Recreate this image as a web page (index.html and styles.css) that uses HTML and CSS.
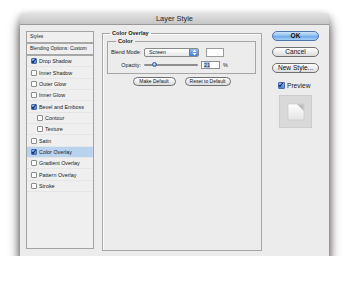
FILE: index.html
```html
<!DOCTYPE html>
<html lang="en">
<head>
    <meta charset="UTF-8">
    <meta name="viewport" content="width=device-width, initial-scale=1.0">
    <title>Layer Style</title>
    <link rel="stylesheet" href="styles.css">
</head>
<body>
    <div class="window">
        <div class="titlebar">Layer Style</div>

        <div class="content">
            <div class="styles-list">
                <div class="head">Styles</div>
                <div class="head">Blending Options: Custom</div>
                <div class="item"><span class="box checked"></span>Drop Shadow</div>
                <div class="item"><span class="box"></span>Inner Shadow</div>
                <div class="item"><span class="box"></span>Outer Glow</div>
                <div class="item"><span class="box"></span>Inner Glow</div>
                <div class="item"><span class="box checked"></span>Bevel and Emboss</div>
                <div class="item sub"><span class="box"></span>Contour</div>
                <div class="item sub"><span class="box"></span>Texture</div>
                <div class="item"><span class="box"></span>Satin</div>
                <div class="item selected"><span class="box checked"></span>Color Overlay</div>
                <div class="item"><span class="box"></span>Gradient Overlay</div>
                <div class="item"><span class="box"></span>Pattern Overlay</div>
                <div class="item"><span class="box"></span>Stroke</div>
            </div>

            <fieldset class="panel">
                <legend>Color Overlay</legend>
                <fieldset class="group">
                    <legend>Color</legend>
                    <div class="row">
                        <span class="label">Blend Mode:</span>
                        <div class="select">
                            <span>Screen</span>
                            <span class="stepper">
                                <svg width="5" height="7" viewBox="0 0 5 7"><path d="M0.5 3 L2.5 0.5 L4.5 3 Z M0.5 4 L2.5 6.5 L4.5 4 Z" fill="#fff"/></svg>
                            </span>
                        </div>
                        <span class="swatch"></span>
                    </div>
                    <div class="row">
                        <span class="label">Opacity:</span>
                        <div class="slider"><span class="knob"></span></div>
                        <span class="number"><span class="sel">21</span></span>
                        <span class="pct">%</span>
                    </div>
                </fieldset>
                <div class="defaults">
                    <button class="pill small make">Make Default</button>
                    <button class="pill small reset">Reset to Default</button>
                </div>
            </fieldset>

            <div class="actions">
                <button class="pill ok">OK</button>
                <button class="pill">Cancel</button>
                <button class="pill">New Style...</button>
                <div class="preview-check"><span class="box checked"></span>Preview</div>
                <div class="preview">
                    <svg width="18" height="18" viewBox="0 0 18 18">
                        <defs>
                            <linearGradient id="pg" x1="0" y1="0" x2="0" y2="1">
                                <stop offset="0" stop-color="#ffffff"/>
                                <stop offset="1" stop-color="#e4e4e4"/>
                            </linearGradient>
                        </defs>
                        <rect x="1" y="1" width="16" height="16" rx="1" fill="url(#pg)" stroke="#c4c4c4" stroke-width="0.6"/>
                        <path d="M10 1.3 L16.7 1.3 L16.7 8 Z" fill="#bdbdbd"/>
                    </svg>
                </div>
            </div>
        </div>
    </div>
</body>
</html>
```

FILE: styles.css
```css
body {
    margin: 0;
    padding: 13px 0 0 20px;
    background: #ffffff;
    font-family: "Liberation Sans", Arial, sans-serif;
    color: #222;
}
.window {
    width: 309px;
    height: 243px;
    background: #ececec;
    border-radius: 3px 3px 0 0;
    box-shadow: 0 11px 12px rgba(45, 30, 30, 0.7), 0 3px 8px rgba(0, 0, 0, 0.4);
}
.titlebar {
    height: 11px;
    line-height: 12px;
    text-align: center;
    font-size: 7.4px;
    color: #262626;
    background: linear-gradient(#e2e2e2, #c6c6c6);
    border-bottom: 1px solid #9a9a9a;
    border-radius: 3px 3px 0 0;
}
.content {
    display: flex;
    padding: 6px 8px 0 6px;
}

/* styles list */
.styles-list {
    width: 66px;
    height: 216px;
    border: 1px solid #a3a3a3;
    background: #efefef;
    font-size: 5.4px;
    white-space: nowrap;
}
.head {
    height: 10px;
    line-height: 10px;
    padding-left: 3px;
    font-size: 4.9px;
    border-bottom: 2px solid #a8a8a8;
}
.item {
    display: flex;
    align-items: center;
    height: 11.35px;
    padding-left: 4px;
    box-sizing: border-box;
    border-bottom: 1px solid #e6e6e6;
}
.item.sub {
    padding-left: 10px;
}
.item.selected {
    background: #b9d3ef;
}
.box {
    display: inline-block;
    width: 4px;
    height: 4px;
    margin-right: 2px;
    border: 0.6px solid #8c8c8c;
    border-radius: 1px;
    background: #fff;
    position: relative;
    flex: none;
}
.box.checked {
    background: linear-gradient(#8fb8ec, #4f86d6);
    border-color: #4a6fa8;
}
.box.checked::after {
    content: "";
    position: absolute;
    left: 1px;
    top: -1px;
    width: 1.4px;
    height: 3.6px;
    border: solid #13245a;
    border-width: 0 1.2px 1.2px 0;
    transform: rotate(40deg);
}

/* main panel */
.panel {
    margin: -1px 0 0 8px;
    width: 160px;
    height: 221px;
    box-sizing: border-box;
    padding: 2px 5px 0 4px;
    border: 1px solid #a6a6a6;
    box-shadow: inset 1px 1px 0 #fbfbfb;
    min-inline-size: 0;
}
.panel legend,
.group legend {
    font-size: 5.6px;
    font-weight: bold;
    line-height: 6px;
    padding: 0 2px;
}
.panel legend {
    margin-left: 3px;
}
.group {
    margin: 0;
    padding: 3px;
    border: 1px solid #a6a6a6;
    min-inline-size: 0;
}
.group legend {
    margin-left: 5px;
}
.row {
    display: flex;
    align-items: center;
    height: 10px;
    font-size: 5.4px;
    white-space: nowrap;
}
.row + .row {
    margin-top: 3px;
}
.label {
    width: 30px;
    text-align: right;
    margin-right: 3px;
}
.select {
    display: flex;
    align-items: center;
    justify-content: space-between;
    width: 55px;
    height: 9px;
    box-sizing: border-box;
    padding-left: 4px;
    border: 1px solid #8a8a8a;
    border-radius: 2px;
    background: linear-gradient(#ffffff, #e8e8e8);
    overflow: hidden;
}
.stepper {
    display: flex;
    align-items: center;
    justify-content: center;
    width: 8px;
    height: 100%;
    background: linear-gradient(#8ebcf0, #3f7fd8);
    border-left: 1px solid #5a7fb0;
}
.swatch {
    width: 16px;
    height: 7px;
    margin-left: 7px;
    border: 1px solid #9c9c9c;
    background: #fff;
}
.slider {
    position: relative;
    width: 54px;
    height: 2px;
    background: #8f8f8f;
    border-radius: 1px;
}
.knob {
    position: absolute;
    left: 8px;
    top: -2px;
    width: 5px;
    height: 5px;
    border-radius: 50%;
    background: radial-gradient(circle at 40% 35%, #cfe3fb, #3f7fd8);
    border: 0.5px solid #3b5f96;
    box-sizing: border-box;
}
.number {
    display: flex;
    align-items: center;
    width: 19px;
    height: 8px;
    margin-left: 3px;
    box-sizing: border-box;
    padding-left: 2px;
    border: 1px solid #8f8f8f;
    background: #fff;
}
.sel {
    background: #a9c8ee;
    line-height: 6px;
}
.pct {
    margin-left: 3px;
}
.defaults {
    display: flex;
    justify-content: center;
    gap: 9px;
    margin-top: 3px;
}

/* buttons */
.pill {
    display: block;
    height: 10px;
    padding: 0;
    border: 1px solid #6f6f6f;
    border-radius: 5px;
    background: linear-gradient(#ffffff, #dcdcdc);
    font-family: "Liberation Sans", Arial, sans-serif;
    font-size: 6.6px;
    line-height: 8px;
    color: #111;
    text-align: center;
}
.pill.small {
    height: 9px;
    font-size: 5px;
    line-height: 7px;
}
.pill.make {
    width: 43px;
}
.pill.reset {
    width: 46px;
}
.actions {
    width: 47px;
    margin-left: 10px;
    display: flex;
    flex-direction: column;
}
.actions .pill {
    width: 47px;
    margin-bottom: 6px;
}
.pill.ok {
    font-weight: bold;
    border-color: #4f74aa;
    background: linear-gradient(#cfe4fa, #8cbcf0 50%, #6ea6e8 51%, #a7d0f6);
}
.preview-check {
    display: flex;
    align-items: center;
    height: 8px;
    margin: 2px 0 0 6px;
    font-size: 6.6px;
}
.preview-check .box {
    width: 5px;
    height: 5px;
}
.preview {
    display: flex;
    align-items: center;
    justify-content: center;
    width: 33px;
    height: 33px;
    margin: 6px 0 0 7px;
    box-sizing: border-box;
    background: #d9d9d9;
    border: 1px solid #cdcdcd;
}
```
